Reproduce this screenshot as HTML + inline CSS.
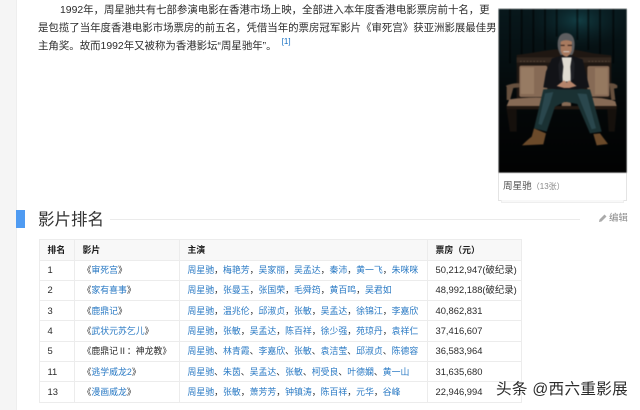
<!DOCTYPE html>
<html lang="zh">
<head>
<meta charset="utf-8">
<style>
html,body{margin:0;padding:0;background:#fff}
body{width:640px;height:410px;overflow:hidden;position:relative;font-family:"Liberation Sans","Noto Sans CJK SC",sans-serif;color:#333}
#w{position:absolute;left:0;top:0;width:640px;height:410px;filter:blur(.35px)}
.a{position:absolute;white-space:nowrap}
.p{font-size:10.43px;line-height:18px;color:#2c2c2c;left:38px}
sup{font-size:8px;color:#136ec2;line-height:0;position:relative;top:-1px}
a{color:#2a7ac4;text-decoration:none}
table{position:absolute;left:39px;top:239px;width:483px;table-layout:fixed;border-collapse:collapse;font-size:8.9px;color:#2a2a2a}
td,th{border:1.5px solid #ececec;padding:0 0 0 7.5px;height:19.3px;line-height:18px;text-align:left;white-space:nowrap;overflow:hidden}
th{background:#f8f8f8;font-weight:bold;color:#1c1c1c;height:19.5px}
td.n{font-size:9.4px}
td.m{font-size:9.4px}
</style>
</head>
<body>
<div id="w">
<div class="a" style="left:0;top:0;width:16px;height:410px;background:#f5f5f5;border-right:1px solid #eee"></div>

<div class="a p" style="left:60px;top:2px">1992年，周星驰共有七部参演电影在香港市场上映，全部进入本年度香港电影票房前十名，更</div>
<div class="a p" style="top:20px">是包揽了当年度香港电影市场票房的前五名，凭借当年的票房冠军影片《审死宫》获亚洲影展最佳男</div>
<div class="a p" style="top:38px">主角奖。故而1992年又被称为香港影坛“周星驰年”。 <sup>&nbsp;[1]</sup></div>

<div class="a" style="left:498px;top:8px;width:129px;height:193px;border:1px solid #e4e4e4;box-sizing:border-box;background:#fff"></div>
<div class="a" style="left:501px;top:200px;width:123px;height:3px;border:1px solid #eee;border-top:0;box-sizing:border-box;background:#f8f8f8"></div>
<svg class="a" style="left:490px;top:0;filter:blur(.5px)" width="150" height="205" viewBox="0 0 450 615">
<defs>
<linearGradient id="c" x1="0" y1="0" x2="0" y2="1"><stop offset="0" stop-color="#08181c"/><stop offset=".55" stop-color="#040809"/><stop offset="1" stop-color="#020202"/></linearGradient>
<radialGradient id="g" cx=".55" cy=".2" r=".5"><stop offset="0" stop-color="#15484f" stop-opacity=".8"/><stop offset="1" stop-color="#0a1f24" stop-opacity="0"/></radialGradient>
</defs>
<rect x="26" y="27" width="384" height="491" fill="url(#c)"/>
<rect x="100" y="27" width="300" height="170" fill="url(#g)"/>
<g stroke="#000" stroke-width="6" opacity=".5">
<path d="M60 27V190M95 27V170M130 27V160M165 27V150M200 27V110M262 27V120M295 27V150M330 27V170M370 27V190"/>
</g>
<!-- sofa back -->
<path d="M80 175V165Q120 160 160 153L195 148L260 150L310 160L364 166V180V295H80Z" fill="#1f1712"/>
<path d="M80 172H364V188H80Z" fill="#33271f"/>
<path d="M90 184H165M295 184H358" stroke="#6b5846" stroke-width="2" stroke-dasharray="5 5"/>
<rect x="88" y="197" width="84" height="94" rx="6" fill="#866a55"/>
<rect x="92" y="202" width="40" height="80" fill="#977b63"/>
<rect x="292" y="198" width="66" height="92" rx="6" fill="#866a55"/>
<rect x="315" y="204" width="38" height="80" fill="#957960"/>
<!-- arms -->
<path d="M48 257Q70 248 88 250V262L70 264L60 300H50V262Z" fill="#66503e"/>
<path d="M358 250Q372 248 382 256V264L372 266L376 300H364Z" fill="#66503e"/>
<!-- seat -->
<path d="M50 318L58 298Q110 291 160 293V318ZM302 293Q350 294 376 304L380 318H300Z" fill="#866a55"/>
<rect x="215" y="306" width="28" height="16" rx="6" fill="#866a55"/>
<path d="M50 318H380V328H50Z" fill="#221811"/>
<path d="M50 328H80V395H60ZM352 328H380L374 395H356Z" fill="#15100c"/>
<!-- legs -->
<path d="M160 268Q225 262 300 268L305 285L335 395L300 400L262 312L225 305L195 320L170 395L132 385L150 310Z" fill="#1a3133"/>
<path d="M165 280L190 276L180 310L155 375L145 372ZM262 280L290 282L318 385L305 388Z" fill="#2a474d"/>
<!-- shoes -->
<path d="M132 385L168 400L160 433L96 436Q112 420 125 410Z" fill="#6b4a2a"/>
<path d="M310 402L330 400L354 432L320 436Z" fill="#6b4a2a"/>
<!-- jacket -->
<path d="M186 175L215 167L245 167L278 178L298 262L262 268L200 268L160 262L168 215Z" fill="#121317"/>
<path d="M215 172H245L242 245H218Z" fill="#e0dcd2"/>
<path d="M214 168L220 200L216 244L208 240L205 195ZM246 168L241 200L243 244L252 235L254 190Z" fill="#1f2025"/>
<!-- hands -->
<path d="M200 258L222 241L230 248L238 241L260 258L238 264H222Z" fill="#b5846a"/>
<!-- head -->
<path d="M203 138Q201 100 228 99Q254 100 254 135Q253 158 246 165L212 165Q204 152 203 138Z" fill="#5e5e60"/>
<path d="M212 125Q228 116 246 125L245 152Q238 170 228 170Q216 168 212 152Z" fill="#a87a5f"/>
<path d="M212 136H224M233 136H246" stroke="#2a1a14" stroke-width="3"/>
<path d="M220 155H238" stroke="#ddd" stroke-width="2.5"/>
</svg>
<div class="a" style="left:503px;top:180px;font-size:9.6px;line-height:13px;color:#555">周星驰<span style="font-size:8px;color:#888">（13张）</span></div>

<div class="a" style="left:16px;top:210px;width:9px;height:18px;background:#4f9bf2"></div>
<div class="a" style="left:38px;top:210px;font-size:16.5px;line-height:20px;color:#333">影片排名</div>
<div class="a" style="left:110px;top:219px;width:470px;height:1px;background:#ebebeb"></div>
<svg class="a" style="left:598px;top:213px" width="10" height="10" viewBox="0 0 10 10"><path d="M1 9L1.5 6.5L6.5 1.5L8.5 3.5L3.5 8.5Z" fill="#aaa"/></svg>
<div class="a" style="left:609px;top:212px;font-size:9.4px;line-height:12px;color:#888">编辑</div>

<table>
<colgroup><col style="width:35px"><col style="width:105px"><col style="width:248px"><col style="width:94px"></colgroup>
<tr><th>排名</th><th>影片</th><th>主演</th><th>票房（元）</th></tr>
<tr><td class="n">1</td><td>《<a>审死宫</a>》</td><td><a>周星驰</a>，<a>梅艳芳</a>，<a>吴家丽</a>，<a>吴孟达</a>，<a>秦沛</a>，<a>黄一飞</a>，<a>朱咪咪</a></td><td class="m">50,212,947(破纪录)</td></tr>
<tr><td class="n">2</td><td>《<a>家有喜事</a>》</td><td><a>周星驰</a>，<a>张曼玉</a>，<a>张国荣</a>，<a>毛舜筠</a>，<a>黄百鸣</a>，<a>吴君如</a></td><td class="m">48,992,188(破纪录)</td></tr>
<tr><td class="n">3</td><td>《<a>鹿鼎记</a>》</td><td><a>周星驰</a>，<a>温兆伦</a>，<a>邱淑贞</a>，<a>张敏</a>，<a>吴孟达</a>，<a>徐锦江</a>，<a>李嘉欣</a></td><td class="m">40,862,831</td></tr>
<tr><td class="n">4</td><td>《<a>武状元苏乞儿</a>》</td><td><a>周星驰</a>，<a>张敏</a>，<a>吴孟达</a>，<a>陈百祥</a>，<a>徐少强</a>，<a>苑琼丹</a>，<a>袁祥仁</a></td><td class="m">37,416,607</td></tr>
<tr><td class="n">5</td><td>《鹿鼎记Ⅱ：神龙教》</td><td><a>周星驰</a>、<a>林青霞</a>、<a>李嘉欣</a>、<a>张敏</a>、<a>袁洁莹</a>、<a>邱淑贞</a>、<a>陈德容</a></td><td class="m">36,583,964</td></tr>
<tr><td class="n">11</td><td>《<a>逃学威龙2</a>》</td><td><a>周星驰</a>、<a>朱茵</a>、<a>吴孟达</a>、<a>张敏</a>、<a>柯受良</a>、<a>叶德嫻</a>、<a>黄一山</a></td><td class="m">31,635,680</td></tr>
<tr><td class="n">13</td><td>《<a>漫画威龙</a>》</td><td><a>周星驰</a>，<a>张敏</a>，<a>萧芳芳</a>，<a>钟镇涛</a>，<a>陈百祥</a>，<a>元华</a>，<a>谷峰</a></td><td class="m">22,946,994</td></tr>
</table>

<div class="a" style="left:496px;top:381px;font-size:15.6px;line-height:18px;letter-spacing:.3px;color:#2b2b2b;text-shadow:0 0 2px #fff,0 0 2px #fff">头条 @西六重影展</div>
</div>
</body>
</html>
